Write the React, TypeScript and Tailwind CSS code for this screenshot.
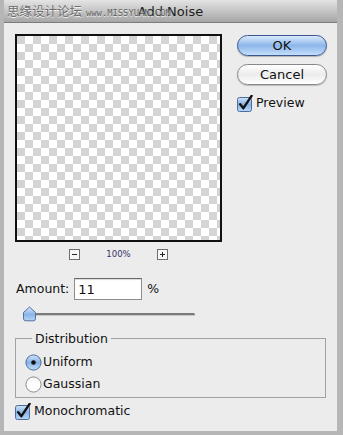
import React from "react";

const font = { fontFamily: '"DejaVu Sans", "Liberation Sans", sans-serif' };

function CheckBox() {
  return (
    <svg width="17" height="17" viewBox="0 0 17 17" className="shrink-0">
      <defs>
        <linearGradient id="cbg" x1="0" y1="0" x2="0" y2="1">
          <stop offset="0" stopColor="#cfe2f8" />
          <stop offset="0.5" stopColor="#87b4e6" />
          <stop offset="1" stopColor="#b9d8f8" />
        </linearGradient>
      </defs>
      <rect x="0.5" y="2.5" width="14" height="14" rx="2" fill="url(#cbg)" stroke="#4d6c9c" />
      <path d="M3.2 9.2 L6.4 13.2 L14.6 0.8" fill="none" stroke="#111" strokeWidth="2.4" strokeLinecap="round" strokeLinejoin="round" />
    </svg>
  );
}

function Radio({ on }: { on: boolean }) {
  return (
    <svg width="17" height="17" viewBox="0 0 17 17" className="shrink-0">
      <defs>
        <linearGradient id="rbOn" x1="0" y1="0" x2="0" y2="1">
          <stop offset="0" stopColor="#d2e4f9" />
          <stop offset="0.5" stopColor="#86b2e4" />
          <stop offset="1" stopColor="#c3def9" />
        </linearGradient>
        <linearGradient id="rbOff" x1="0" y1="0" x2="0" y2="1">
          <stop offset="0" stopColor="#f4f4f4" />
          <stop offset="0.5" stopColor="#ffffff" />
          <stop offset="1" stopColor="#fcfcfc" />
        </linearGradient>
      </defs>
      <circle cx="8.5" cy="8.5" r="7.6" fill={on ? "url(#rbOn)" : "url(#rbOff)"} stroke={on ? "#4a6a9c" : "#8c8c8c"} />
      {on && <circle cx="8.5" cy="8.5" r="2.3" fill="#111" />}
    </svg>
  );
}

export default function App() {
  return (
    <div className="w-[343px] h-[435px] bg-[#b6b6b6] pl-[4px] overflow-hidden" style={font}>
      <div className="w-[333px] h-[431px] bg-[#ececec] flex flex-col">
        {/* Title bar */}
        <div className="relative h-[23px] shrink-0 flex items-center justify-center bg-gradient-to-b from-[#e4e4e4] to-[#a6a6a6] border-b border-[#7d7d7d]">
          <span className="text-[13px] text-[#1e1e1e] leading-none">Add Noise</span>
          <div className="absolute left-[3px] top-[3px] flex items-end gap-[4px] pointer-events-none">
            <span
              className="text-[12.5px] leading-[16px] text-[#6c6c6c] [text-shadow:0_1px_0_#f4f4f4]"
              style={{ fontFamily: '"Noto Sans CJK SC", sans-serif' }}
            >
              思缘设计论坛
            </span>
            <span
              className="text-[8.8px] leading-[12px] text-[#5e5e5e] [text-shadow:0_1px_0_#eeeeee]"
              style={{ fontFamily: '"DejaVu Sans Mono", monospace' }}
            >
              www.MISSYUAN.COM
            </span>
          </div>
        </div>

        {/* Content */}
        <div className="pl-[11px] pt-[11px] flex flex-col">
          <div className="flex">
            <div className="w-[207px] h-[208px] border-2 border-[#111] bg-[conic-gradient(#ffffff_25%,#d4d4d4_0_50%,#ffffff_0_75%,#d4d4d4_0)] bg-[length:16px_16px]" />
            <div className="ml-[15px] w-[90px] flex flex-col">
              <button className="mt-[1px] h-[21px] w-[90px] rounded-full border border-[#3b5790] bg-gradient-to-b from-[#dbe9fb] via-[#8db7ea] to-[#c4defb] text-[13px] text-[#111] leading-none shadow-[0_1px_1px_rgba(0,0,0,0.25)]">
                OK
              </button>
              <button className="mt-[8px] h-[21px] w-[90px] rounded-full border border-[#878787] bg-gradient-to-b from-[#ffffff] via-[#ececec] to-[#ffffff] text-[13px] text-[#111] leading-none shadow-[0_1px_1px_rgba(0,0,0,0.2)]">
                Cancel
              </button>
              <div className="mt-[10px] flex items-center gap-[2px]">
                <CheckBox />
                <span className="text-[12.5px] leading-none text-[#111]">Preview</span>
              </div>
            </div>
          </div>

          {/* zoom row */}
          <div className="mt-[7px] w-[207px] h-[11px] flex items-center justify-center gap-[26px]">
            <div className="w-[11px] h-[11px] border border-[#6e6e6e] bg-[#f7f7f7] flex items-center justify-center">
              <div className="w-[5px] h-[1px] bg-[#222]" />
            </div>
            <span className="text-[8.5px] leading-none text-[#34346a]">100%</span>
            <div className="relative w-[11px] h-[11px] border border-[#6e6e6e] bg-[#f7f7f7] flex items-center justify-center">
              <div className="w-[5px] h-[1px] bg-[#222]" />
              <div className="absolute w-[1px] h-[5px] bg-[#222]" />
            </div>
          </div>

          {/* Amount */}
          <div className="mt-[18px] h-[22px] flex items-center">
            <span className="ml-[1px] text-[12.5px] text-[#111] leading-none">Amount:</span>
            <div className="ml-[5px] w-[68px] h-[22px] bg-white border border-[#8e8e8e] border-t-[#6a6a6a] flex items-center pl-[3px] text-[13px] text-[#111] leading-none shadow-[inset_0_1px_1px_rgba(0,0,0,0.15)]">
              11
            </div>
            <span className="ml-[5px] text-[12.5px] text-[#111] leading-none">%</span>
          </div>

          {/* Slider */}
          <div className="relative mt-[6px] h-[15px] w-[180px]">
            <div className="absolute left-[12px] right-0 top-[7px] h-[3px] rounded-full bg-[#7b7b7b] border-b border-[#c9c9c9]" />
            <svg className="absolute left-[7px] top-0" width="15" height="16" viewBox="0 0 15 16">
              <defs>
                <linearGradient id="thumb" x1="0" y1="0" x2="0" y2="1">
                  <stop offset="0" stopColor="#d6e7fb" />
                  <stop offset="0.55" stopColor="#8ab5e8" />
                  <stop offset="1" stopColor="#b9d6f6" />
                </linearGradient>
              </defs>
              <path d="M1.5 6.5 L7.5 1 L13.5 6.5 V12.5 Q13.5 14.8 11.5 14.8 H3.5 Q1.5 14.8 1.5 12.5 Z" fill="url(#thumb)" stroke="#52709e" />
            </svg>
          </div>

          {/* Distribution */}
          <fieldset className="mt-[10px] w-[311px] border border-[#a2a2a2] pl-[9px] pb-[4px]">
            <legend className="ml-[7px] px-[3px] text-[12.5px] leading-[15px] text-[#111]">Distribution</legend>
            <div className="mt-[8px] h-[17px] flex items-center gap-[1px]">
              <Radio on />
              <span className="text-[12.5px] leading-none text-[#111]">Uniform</span>
            </div>
            <div className="mt-[5px] h-[17px] flex items-center gap-[1px]">
              <Radio on={false} />
              <span className="text-[12.5px] leading-none text-[#111]">Gaussian</span>
            </div>
          </fieldset>

          <div className="mt-[5px] h-[17px] flex items-center gap-[2px]">
            <CheckBox />
            <span className="text-[12.5px] leading-none text-[#111]">Monochromatic</span>
          </div>
        </div>
      </div>
    </div>
  );
}
